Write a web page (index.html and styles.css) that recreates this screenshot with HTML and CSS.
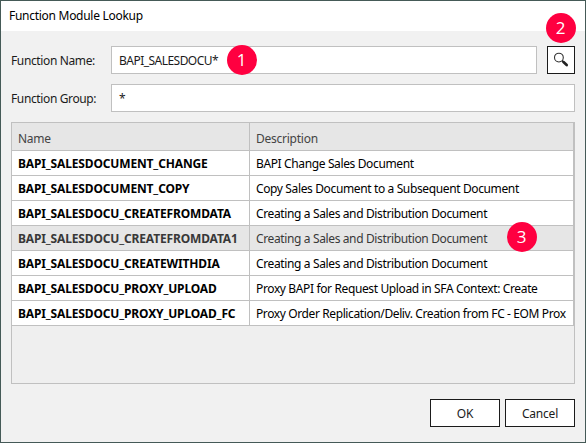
FILE: index.html
```html
<!DOCTYPE html>
<html lang="en">
<head>
<meta charset="utf-8">
<title>Function Module Lookup</title>
<link rel="stylesheet" href="styles.css">
</head>
<body>
<main class="dialog">
  <header class="titlebar">Function Module Lookup</header>
  <div class="content">
    <div class="field">
      <span class="label">Function Name:</span>
      <div class="input"><span class="query">BAPI_SALESDOCU*</span><span class="badge badge-one">1</span></div>
      <button class="search" aria-label="Search">
        <svg width="16" height="16" viewBox="0 0 16 16">
          <circle cx="5.9" cy="5.6" r="4.4" fill="#fff" stroke="#333" stroke-width="1.1"/>
          <path d="M9.1 8.6l1.5 1.4" stroke="#222" stroke-width="1.5"/>
          <path d="M10.5 10.1l3.2 3" stroke="#222" stroke-width="2.7" stroke-linecap="round"/>
        </svg>
        <span class="badge badge-two">2</span>
      </button>
    </div>
    <div class="field">
      <span class="label">Function Group:</span>
      <div class="input">*</div>
    </div>
    <div class="grid">
      <div class="row head"><span>Name</span><span>Description</span></div>
      <div class="row"><b>BAPI_SALESDOCUMENT_CHANGE</b><span>BAPI Change Sales Document</span></div>
      <div class="row"><b>BAPI_SALESDOCUMENT_COPY</b><span>Copy Sales Document to a Subsequent Document</span></div>
      <div class="row"><b>BAPI_SALESDOCU_CREATEFROMDATA</b><span>Creating a Sales and Distribution Document</span></div>
      <div class="row selected"><b>BAPI_SALESDOCU_CREATEFROMDATA1</b><span>Creating a Sales and Distribution Document</span><i class="badge badge-three">3</i></div>
      <div class="row"><b>BAPI_SALESDOCU_CREATEWITHDIA</b><span>Creating a Sales and Distribution Document</span></div>
      <div class="row"><b>BAPI_SALESDOCU_PROXY_UPLOAD</b><span>Proxy BAPI for Request Upload in SFA Context: Create</span></div>
      <div class="row"><b>BAPI_SALESDOCU_PROXY_UPLOAD_FC</b><span><span class="clip">Proxy Order Replication/Deliv. Creation from FC - EOM Prox</span></span></div>
    </div>
    <footer class="actions"><button>OK</button><button>Cancel</button></footer>
  </div>
</main>
</body>
</html>
```
FILE: styles.css
```css
* { box-sizing: border-box; }
body { margin: 0; font: 12px/16px "Noto Sans", "Open Sans", sans-serif; color: #1b1b1b; letter-spacing: -0.37px; }
.dialog { width: 586px; height: 443px; border: 1px solid #455a57; background: #f1f1f1; overflow: hidden; }
.titlebar { height: 30px; padding: 7px 8px; background: #fff; color: #000; letter-spacing: -0.28px; }
.content { padding: 15px 10px 0; }
.field { display: flex; height: 28px; margin-bottom: 10px; align-items: center; }
.label { width: 100px; flex: none; padding-top: 2px; }
.input { position: relative; flex: 1; height: 28px; padding: 6px 7px 4px; border: 1px solid #c0c0c0; background: #fff; }
.query { letter-spacing: -0.53px; }
button { font: inherit; letter-spacing: -0.2px; color: inherit; background: #fff; border: 1px solid #1b1b1b; border-radius: 0; height: 28px; padding: 2px 0 0; }
.search { position: relative; width: 28px; margin-left: 10px; padding: 0; display: flex; align-items: center; justify-content: center; }
.badge { position: absolute; width: 30px; height: 30px; border-radius: 50%; background: #ff0040; color: #fff; font: 17px/30px "Open Sans", sans-serif; text-align: center; letter-spacing: 0; z-index: 1; }
.badge-one { left: 114.5px; top: -2.5px; }
.badge-two { left: -2.5px; top: -34.5px; }
.badge-three { left: 494.5px; top: -4.5px; }
.grid { height: 262px; border: 1px solid #c0c0c0; background: #efefef; }
.row { position: relative; display: grid; grid-template-columns: 238px 324px; width: 562px; height: 25px; border-bottom: 1px solid #c0c0c0; background: #fff; color: #000; line-height: 26px; white-space: nowrap; }
.row > b, .row > span { height: 24px; padding-left: 6px; border-right: 1px solid #c0c0c0; }
.row > b { letter-spacing: -0.15px; }
.row.head { height: 28px; background: #e6e6e6; color: #444; line-height: 31px; }
.row.head > span { height: 27px; letter-spacing: -0.25px; }
.row.selected { background: #e6e6e6; color: #383838; }
.clip { display: block; width: 311px; height: 24px; overflow: hidden; letter-spacing: -0.39px; }
.actions { display: flex; justify-content: flex-end; gap: 5px; margin-top: 15px; }
.actions button { width: 70px; }
```
